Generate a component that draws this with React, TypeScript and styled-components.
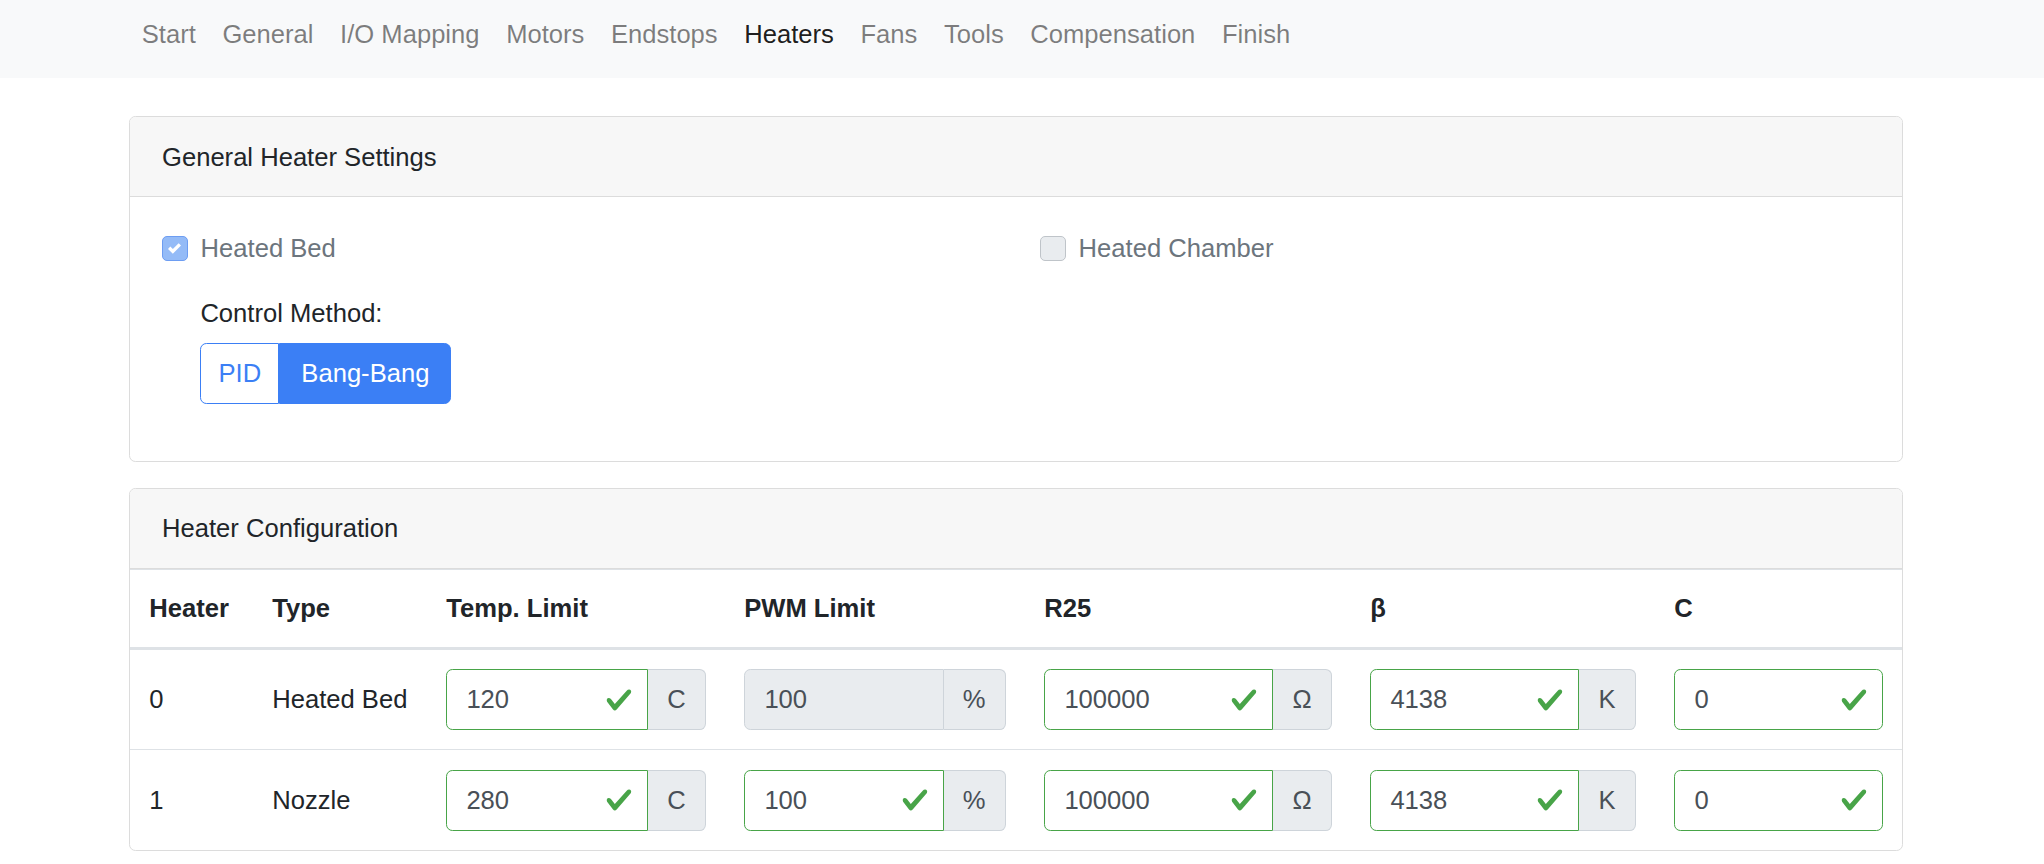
import React from "react";
import styled, { createGlobalStyle, css } from "styled-components";

const GlobalStyle = createGlobalStyle`
  * { box-sizing: border-box; }
  body {
    margin: 0;
    background: #fff;
    font-family: "Liberation Sans", Arial, sans-serif;
    font-size: 25.6px;
    line-height: 38.4px;
    color: #212529;
  }
`;

const GREEN = "#48a448";
const BLUE = "#3b7ff5";

const NavBar = styled.nav`
  background: #f8f9fa;
  height: 78px;
  padding: 15px 0 0 128.5px;
`;

const NavList = styled.ul`
  display: flex;
  list-style: none;
  margin: 0;
  padding: 0;
`;

const NavLink = styled.li<{ $active?: boolean }>`
  padding: 0 13.3px;
  line-height: 38.4px;
  color: ${(p) => (p.$active ? "rgba(0, 0, 0, 0.9)" : "rgba(0, 0, 0, 0.5)")};
  cursor: pointer;
`;

const Main = styled.main`
  padding: 38px 141px 0 129px;
`;

const Card = styled.section<{ $gap?: number }>`
  border: 1px solid #dcdcdc;
  border-radius: 6.4px;
  overflow: hidden;
  margin-bottom: ${(p) => p.$gap ?? 0}px;
`;

const CardHeader = styled.header`
  background: #f7f7f7;
  border-bottom: 1px solid #dcdcdc;
  padding: 20.5px 32px;
  line-height: 38.4px;
`;

const CardBody = styled.div`
  padding: 32px;
`;

const TwoCols = styled.div`
  display: grid;
  grid-template-columns: 1fr 1fr;
  column-gap: 48px;
`;

const CheckRow = styled.label`
  display: flex;
  align-items: center;
  gap: 13px;
  color: #6c757d;
  height: 38.4px;
`;

const CheckBox = styled.span<{ $checked?: boolean }>`
  width: 25.6px;
  height: 25.6px;
  border-radius: 5px;
  display: flex;
  align-items: center;
  justify-content: center;
  ${(p) =>
    p.$checked
      ? css`
          background: #94bbf7;
          border: 1px solid #6d9df2;
        `
      : css`
          background: #e9ecef;
          border: 1px solid #bfc4c9;
        `}
`;

const MethodBlock = styled.div`
  margin: 26px 0 25px 38.4px;
`;

const FieldLabel = styled.div`
  line-height: 38.4px;
  margin-bottom: 10.6px;
`;

const ButtonGroup = styled.div`
  display: inline-flex;
`;

const ToggleButton = styled.button<{ $active?: boolean }>`
  font: inherit;
  height: 61px;
  padding: 0;
  border: 1px solid ${BLUE};
  background: ${(p) => (p.$active ? BLUE : "#fff")};
  color: ${(p) => (p.$active ? "#fff" : BLUE)};
  cursor: pointer;
  &:first-child {
    border-radius: 6.4px 0 0 6.4px;
    width: 79px;
  }
  &:last-child {
    border-radius: 0 6.4px 6.4px 0;
    width: 172px;
  }
`;

const Table = styled.table`
  width: 100%;
  table-layout: fixed;
  border-collapse: collapse;
`;

const Th = styled.th`
  text-align: left;
  font-weight: 700;
  padding: 19.2px 19.2px;
  border-top: 1px solid #dee2e6;
  border-bottom: 3px solid #dee2e6;
  line-height: 38.4px;
  white-space: nowrap;
`;

const Td = styled.td`
  padding: 19.2px 19.2px;
  border-top: 1px solid #dee2e6;
  vertical-align: middle;
  white-space: nowrap;
`;

const InputGroup = styled.div`
  display: flex;
  height: 61px;
`;

const InputWrap = styled.div`
  position: relative;
  flex: 1;
  min-width: 0;
  display: flex;
`;

const Input = styled.input<{ $valid?: boolean; $alone?: boolean }>`
  flex: 1;
  min-width: 0;
  width: 100%;
  font: inherit;
  color: #495057;
  padding: 0 50px 0 19.2px;
  border-radius: ${(p) => (p.$alone ? "6.4px" : "6.4px 0 0 6.4px")};
  border: 1px solid ${(p) => (p.$valid ? GREEN : "#ced4da")};
  background: ${(p) => (p.$valid ? "#fff" : "#e9ecef")};
  outline: none;
`;

const ValidMark = styled.svg`
  position: absolute;
  right: 15px;
  top: 50%;
  transform: translateY(-50%);
  width: 28px;
  height: 28px;
`;

const Addon = styled.span`
  display: flex;
  align-items: center;
  padding: 0 19.2px;
  background: #e9ecef;
  border: 1px solid #ced4da;
  border-left: none;
  border-radius: 0 6.4px 6.4px 0;
  color: #495057;
`;

const Check = ({ checked, label }: { checked?: boolean; label: string }) => (
  <CheckRow>
    <CheckBox $checked={checked}>
      {checked && (
        <svg viewBox="0 0 8 8" width="13" height="13">
          <path fill="#fff" d="M6.564.75l-3.59 3.612-1.538-1.55L0 4.26l2.974 2.99L8 2.193z" />
        </svg>
      )}
    </CheckBox>
    {label}
  </CheckRow>
);

const Field = ({ value, unit, disabled }: { value: string; unit?: string; disabled?: boolean }) => (
  <InputGroup>
    <InputWrap>
      <Input readOnly value={value} $valid={!disabled} $alone={!unit} disabled={disabled} />
      {!disabled && (
        <ValidMark viewBox="0 0 8 8">
          <path
            fill={GREEN}
            d="M2.3 6.73L.6 4.53c-.4-1.04.46-1.4 1.1-.8l1.1 1.4 3.4-3.8c.6-.63 1.6-.27 1.2.7l-4 4.6c-.43.5-.8.4-1.1.1z"
          />
        </ValidMark>
      )}
    </InputWrap>
    {unit && <Addon>{unit}</Addon>}
  </InputGroup>
);

const navItems = [
  "Start",
  "General",
  "I/O Mapping",
  "Motors",
  "Endstops",
  "Heaters",
  "Fans",
  "Tools",
  "Compensation",
  "Finish",
];

const heaters = [
  { id: "0", type: "Heated Bed", temp: "120", pwm: "100", pwmDisabled: true },
  { id: "1", type: "Nozzle", temp: "280", pwm: "100", pwmDisabled: false },
];

const columns = [123, 174, 298, 300, 326, 304, 247];

export default function App() {
  return (
    <>
      <GlobalStyle />
      <NavBar>
        <NavList>
          {navItems.map((item) => (
            <NavLink key={item} $active={item === "Heaters"}>
              {item}
            </NavLink>
          ))}
        </NavList>
      </NavBar>
      <Main>
        <Card $gap={26}>
          <CardHeader>General Heater Settings</CardHeader>
          <CardBody>
            <TwoCols>
              <div>
                <Check checked label="Heated Bed" />
                <MethodBlock>
                  <FieldLabel>Control Method:</FieldLabel>
                  <ButtonGroup>
                    <ToggleButton>PID</ToggleButton>
                    <ToggleButton $active>Bang-Bang</ToggleButton>
                  </ButtonGroup>
                </MethodBlock>
              </div>
              <div>
                <Check label="Heated Chamber" />
              </div>
            </TwoCols>
          </CardBody>
        </Card>
        <Card>
          <CardHeader>Heater Configuration</CardHeader>
          <Table>
            <colgroup>
              {columns.map((w, i) => (
                <col key={i} style={{ width: w }} />
              ))}
            </colgroup>
            <thead>
              <tr>
                <Th>Heater</Th>
                <Th>Type</Th>
                <Th>Temp. Limit</Th>
                <Th>PWM Limit</Th>
                <Th>R25</Th>
                <Th>β</Th>
                <Th>C</Th>
              </tr>
            </thead>
            <tbody>
              {heaters.map((h) => (
                <tr key={h.id}>
                  <Td>{h.id}</Td>
                  <Td>{h.type}</Td>
                  <Td>
                    <Field value={h.temp} unit="C" />
                  </Td>
                  <Td>
                    <Field value={h.pwm} unit="%" disabled={h.pwmDisabled} />
                  </Td>
                  <Td>
                    <Field value="100000" unit="Ω" />
                  </Td>
                  <Td>
                    <Field value="4138" unit="K" />
                  </Td>
                  <Td>
                    <Field value="0" />
                  </Td>
                </tr>
              ))}
            </tbody>
          </Table>
        </Card>
      </Main>
    </>
  );
}
